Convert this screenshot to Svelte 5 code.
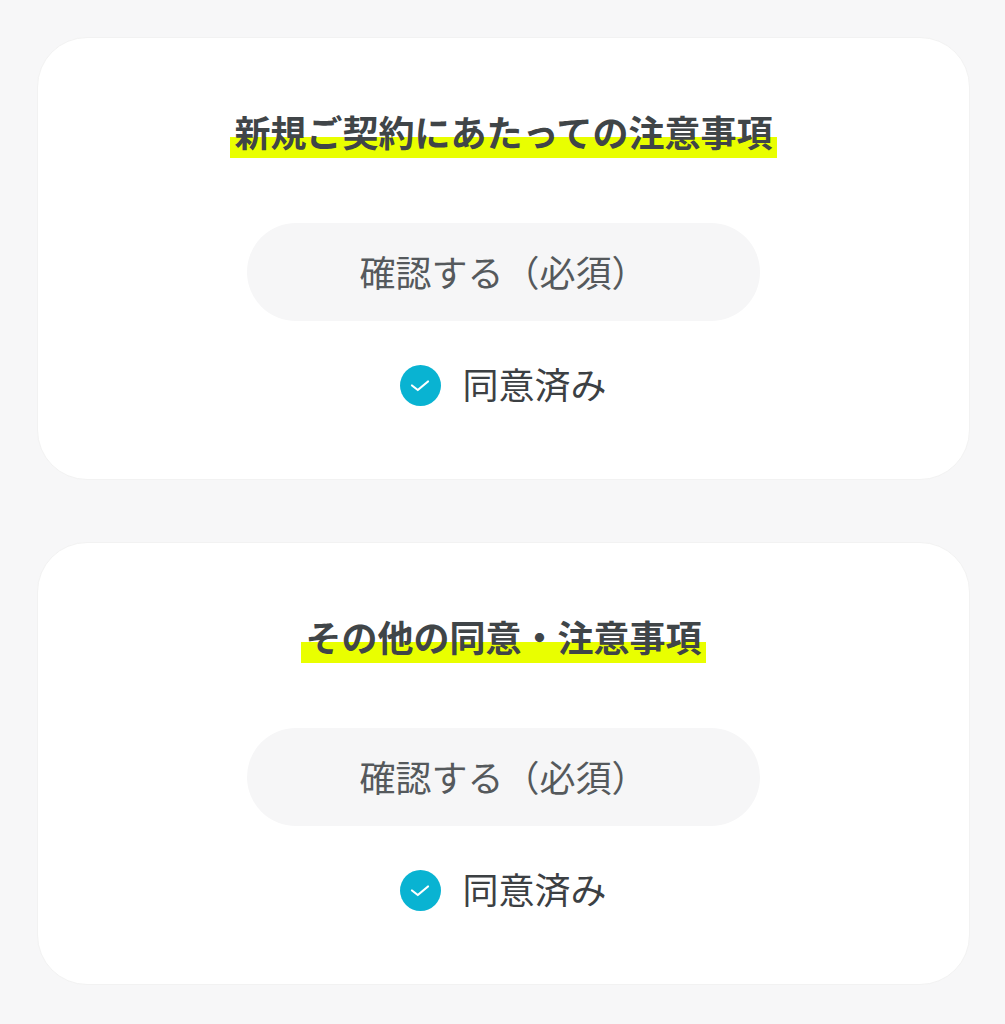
<script>
  const sections = ['新規ご契約にあたっての注意事項', 'その他の同意・注意事項'];
</script>

<main class="page">
  {#each sections as title}
    <section class="card">
      <h2 class="title"><span class="mark">{title}</span></h2>
      <button class="confirm" type="button">確認する（必須）</button>
      <div class="agreed">
        <svg class="check" viewBox="0 0 41 41" width="41" height="41" aria-hidden="true">
          <circle cx="20.5" cy="20.5" r="20.5" fill="#09b3d2" />
          <path d="M12 20.5 L17.8 25 L28 16.5" fill="none" stroke="#fff" stroke-width="2.2" stroke-linecap="round" stroke-linejoin="round" />
        </svg>
        <span class="label">同意済み</span>
      </div>
    </section>
  {/each}
</main>

<style>
  :global(body) {
    margin: 0;
    background: #f7f7f8;
  }
  .page {
    box-sizing: border-box;
    height: 1024px;
    padding: 37px 35px 0 37px;
    display: flex;
    flex-direction: column;
    gap: 62px;
    font-family: "Noto Sans CJK JP", "Noto Sans", sans-serif;
    color: #404548;
  }
  .card {
    box-sizing: border-box;
    height: 443px;
    background: #fff;
    border: 1px solid #f2f2f2;
    border-radius: 50px;
    display: flex;
    flex-direction: column;
    align-items: center;
    padding-top: 70px;
  }
  .title {
    margin: 0;
    font-size: 36px;
    font-weight: 700;
  }
  .mark {
    display: block;
    padding: 0 4px 4px;
    line-height: 46px;
    background: linear-gradient(transparent 58%, #e9ff00 58%);
  }
  .confirm {
    margin-top: 65px;
    width: 513px;
    height: 98px;
    border: 0;
    border-radius: 49px;
    background: #f6f6f7;
    color: #55595c;
    font: inherit;
    font-size: 36px;
    padding: 0 0 3px;
  }
  .agreed {
    margin-top: 42px;
    display: flex;
    align-items: center;
    gap: 21px;
    font-size: 36px;
    line-height: 44px;
    font-weight: 400;
    color: #3c4043;
  }
  .label {
    position: relative;
    top: -2px;
  }
  .check {
    display: block;
  }
</style>
